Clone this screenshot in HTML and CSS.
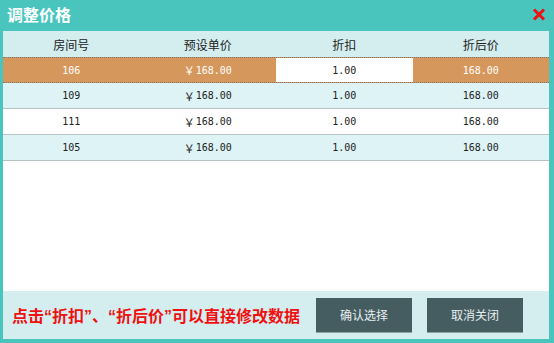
FILE: index.html
```html
<!DOCTYPE html>
<html>
<head>
    <meta charset="utf-8">
    <title>调整价格</title>
    <link rel="stylesheet" href="styles.css">
</head>
<body>
    <div class="dialog">
        <div class="titlebar">
            <span class="title">调整价格</span>
            <svg class="close" width="14" height="13" viewBox="0 0 14 13">
                <path d="M2 1.5 L12 11.5 M12 1.5 L2 11.5" stroke="#f01010" stroke-width="3" fill="none"/>
            </svg>
        </div>
        <div class="panel">
            <div class="table">
                <div class="row head">
                    <div>房间号</div>
                    <div>预设单价</div>
                    <div>折扣</div>
                    <div>折后价</div>
                </div>
                <div class="row selected">
                    <div class="num">106</div>
                    <div class="num"><span class="yen">￥</span>168.00</div>
                    <div class="num edit">1.00</div>
                    <div class="num">168.00</div>
                </div>
                <div class="row alt">
                    <div class="num">109</div>
                    <div class="num"><span class="yen">￥</span>168.00</div>
                    <div class="num">1.00</div>
                    <div class="num">168.00</div>
                </div>
                <div class="row">
                    <div class="num">111</div>
                    <div class="num"><span class="yen">￥</span>168.00</div>
                    <div class="num">1.00</div>
                    <div class="num">168.00</div>
                </div>
                <div class="row alt">
                    <div class="num">105</div>
                    <div class="num"><span class="yen">￥</span>168.00</div>
                    <div class="num">1.00</div>
                    <div class="num">168.00</div>
                </div>
            </div>
            <div class="footer">
                <span class="hint">点击“折扣”、“折后价”可以直接修改数据</span>
                <button class="btn">确认选择</button>
                <button class="btn">取消关闭</button>
            </div>
        </div>
    </div>
</body>
</html>
```

FILE: styles.css
```css
body {
    margin: 0;
    font-family: "Noto Sans CJK SC", sans-serif;
}
.dialog {
    width: 554px;
    height: 343px;
    background-color: #49c5be;
    display: flex;
    flex-direction: column;
}
.titlebar {
    height: 31px;
    display: flex;
    align-items: center;
    justify-content: space-between;
    padding: 0 8px 0 7px;
}
.title {
    color: #fff;
    font-size: 16px;
    font-weight: bold;
    line-height: 16px;
    margin-top: -3px;
}
.close {
    margin-top: -3px;
}
.panel {
    margin: 0 5px 4px 3px;
    height: 308px;
    background-color: #fff;
    display: flex;
    flex-direction: column;
}
.table {
    flex: 1;
}
.row {
    display: grid;
    grid-template-columns: repeat(4, 1fr);
    height: 26px;
    box-sizing: border-box;
    border-bottom: 1px solid #b7c3c4;
    font-size: 12px;
    color: #222;
}
.row div {
    display: flex;
    align-items: center;
    justify-content: center;
}
.row.head {
    background-color: #d4eef0;
    border-bottom: none;
}
.row.alt {
    background-color: #ddf3f5;
}
.row.selected {
    background-color: #d5975c;
    color: #fff;
    border-top: 1px dotted #777;
    border-bottom: 1px dotted #777;
}
.num {
    font-family: "DejaVu Sans Mono", monospace;
    font-size: 10px;
}
.yen {
    font-family: "Noto Sans CJK SC", sans-serif;
    font-size: 11px;
    margin-right: 1px;
}
.row.selected .edit {
    background-color: #fff;
    color: #222;
}
.footer {
    height: 48px;
    background-color: #d4eef0;
    display: flex;
    align-items: center;
    padding: 0 26px 0 9px;
}
.hint {
    flex: 1;
    color: #f01010;
    font-family: "Liberation Sans", "Noto Sans CJK SC", sans-serif;
    font-size: 16px;
    font-weight: bold;
}
.btn {
    width: 96px;
    height: 35px;
    margin-left: 15px;
    border: none;
    border-bottom: 1px solid #8aa2a5;
    background-color: #455d61;
    color: #e8eeee;
    font-family: "Noto Sans CJK SC", sans-serif;
    font-size: 12px;
}
```
